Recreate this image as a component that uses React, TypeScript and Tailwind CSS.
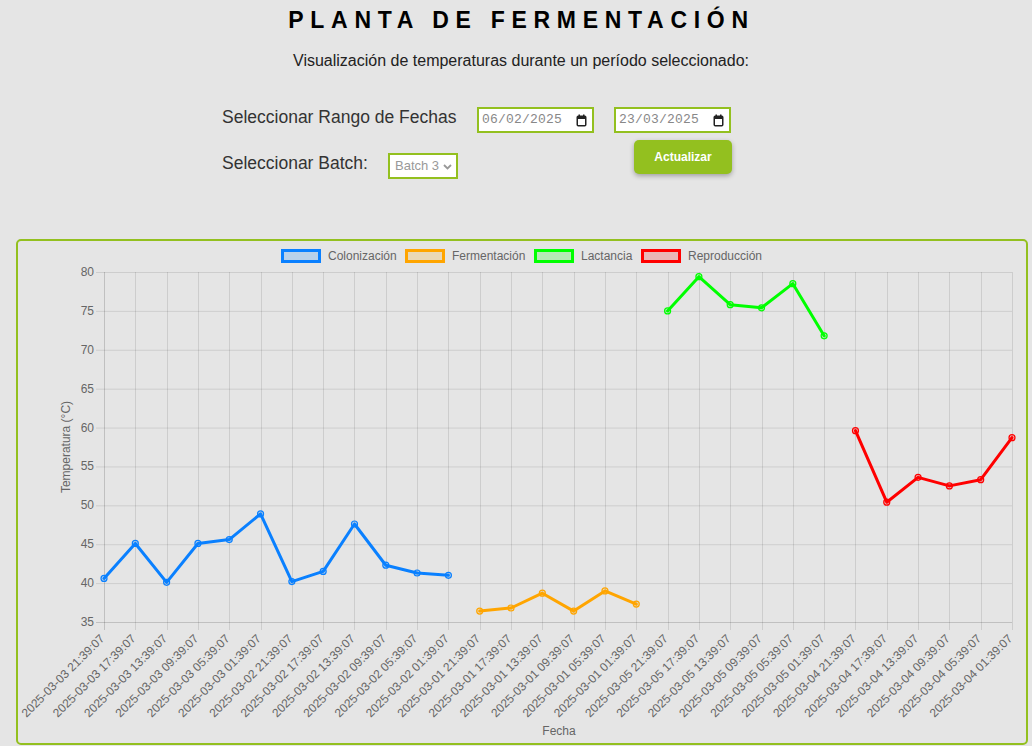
import React from "react";

const GREEN = "#93c01f";
const FONT = '"Liberation Sans", Arial, sans-serif';

const X0 = 104;
const X1 = 1012;
const Y80 = 272;
const Y35 = 622;
const N = 30;
const xAt = (i: number) => X0 + (i * (X1 - X0)) / (N - 1);
const yAt = (v: number) => Y80 + ((80 - v) * (Y35 - Y80)) / 45;

const days = ["03", "02", "01", "05", "04"];
const hours = ["21", "17", "13", "09", "05", "01"];
const labels: string[] = [];
days.forEach((d) => hours.forEach((h) => labels.push(`2025-03-${d} ${h}:39:07`)));

type Series = { name: string; color: string; fill: string; start: number; values: number[] };
const series: Series[] = [
  {
    name: "Colonización",
    color: "#0a80ff",
    fill: "rgba(10,128,255,0.2)",
    start: 0,
    values: [40.6, 45.1, 40.1, 45.1, 45.6, 48.9, 40.2, 41.5, 47.6, 42.3, 41.3, 41.0],
  },
  { name: "Fermentación", color: "#ffa500", fill: "rgba(255,165,0,0.2)", start: 12, values: [36.4, 36.8, 38.7, 36.4, 39.0, 37.3] },
  { name: "Lactancia", color: "#00ff00", fill: "rgba(0,255,0,0.2)", start: 18, values: [75.0, 79.4, 75.8, 75.4, 78.5, 71.8] },
  { name: "Reproducción", color: "#ff0000", fill: "rgba(255,0,0,0.2)", start: 24, values: [59.6, 50.4, 53.6, 52.5, 53.3, 58.7] },
];

const legend = [
  { box: 281, text: 328 },
  { box: 405, text: 452 },
  { box: 534, text: 581 },
  { box: 641, text: 688 },
];

const yTicks = [80, 75, 70, 65, 60, 55, 50, 45, 40, 35];

function Chart() {
  return (
    <svg width={1008} height={502} viewBox="18 241 1008 502" className="block" style={{ fontFamily: FONT }}>
      {series.map((s, i) => (
        <g key={s.name}>
          <rect x={legend[i].box + 1.5} y={250.5} width={37} height={11} fill={s.fill} stroke={s.color} strokeWidth={3} />
          <text x={legend[i].text} y={260} fontSize={12} fill="#666">
            {s.name}
          </text>
        </g>
      ))}
      {yTicks.map((v) => (
        <g key={v}>
          <line x1={96} x2={X1} y1={yAt(v) + 0.5} y2={yAt(v) + 0.5} stroke={v === 35 ? "rgba(0,0,0,0.16)" : "rgba(0,0,0,0.1)"} strokeWidth={1} />
          <text x={94} y={yAt(v) + 4} fontSize={12} fill="#666" textAnchor="end">
            {v}
          </text>
        </g>
      ))}
      {labels.map((l, i) => (
        <g key={l}>
          <line
            x1={Math.round(xAt(i)) + 0.5}
            x2={Math.round(xAt(i)) + 0.5}
            y1={Y80}
            y2={630}
            stroke={i === 0 ? "rgba(0,0,0,0.16)" : "rgba(0,0,0,0.1)"}
            strokeWidth={1}
          />
          <text
            x={xAt(i) - 1}
            y={637}
            fontSize={12}
            fill="#666"
            textAnchor="end"
            dominantBaseline="middle"
            transform={`rotate(-45 ${xAt(i) - 1} 637)`}
          >
            {l}
          </text>
        </g>
      ))}
      <text x={70} y={447} fontSize={12} fill="#666" textAnchor="middle" transform="rotate(-90 70 447)">
        Temperatura (°C)
      </text>
      <text x={559} y={735} fontSize={12} fill="#666" textAnchor="middle">
        Fecha
      </text>
      {series.map((s) => {
        const pts = s.values.map((v, k) => [xAt(s.start + k), yAt(v)] as const);
        return (
          <g key={s.name}>
            <polyline
              points={pts.map((p) => `${p[0]},${p[1]}`).join(" ")}
              fill="none"
              stroke={s.color}
              strokeWidth={3}
              strokeLinejoin="round"
              strokeLinecap="round"
            />
            {pts.map((p, k) => (
              <circle key={k} cx={p[0]} cy={p[1]} r={3} fill={s.fill} stroke={s.color} strokeWidth={1.2} />
            ))}
          </g>
        );
      })}
    </svg>
  );
}

function CalendarIcon() {
  return (
    <svg width={11} height={13} viewBox="0 0 11 13">
      <rect x={1.25} y={2.25} width={8.5} height={9.5} rx={1} fill="none" stroke="#222" strokeWidth={1.5} />
      <rect x={1} y={2} width={9} height={3} fill="#222" />
      <rect x={2.5} y={0.5} width={1.5} height={2} fill="#222" />
      <rect x={7} y={0.5} width={1.5} height={2} fill="#222" />
    </svg>
  );
}

function DateBox({ value }: { value: string }) {
  return (
    <div className="w-[117px] h-[26px] border-2 border-[#93c01f] bg-white flex items-center justify-between pl-[3px] pr-[5px]">
      <span className="text-[13px] text-[#888] tracking-[0.2px]" style={{ fontFamily: '"Liberation Mono", "DejaVu Sans Mono", monospace' }}>
        {value}
      </span>
      <CalendarIcon />
    </div>
  );
}

export default function App() {
  return (
    <div className="w-[1032px] h-[746px] bg-[#e5e5e5] overflow-hidden" style={{ fontFamily: FONT }}>
      <div className="pt-[9px] pl-[10px] text-center">
        <div className="text-[23px] leading-[23px] font-bold text-black tracking-[6.7px] pl-[1px]">
          PLANTA DE FERMENTACIÓN
        </div>
        <div className="mt-[19px] text-[16px] leading-[20px] text-[#222]">
          Visualización de temperaturas durante un período seleccionado:
        </div>
      </div>

      <div className="mt-[36px] ml-[222px] flex">
        <div className="flex flex-col gap-[20px]">
          <div className="flex items-start">
            <div className="text-[17.5px] leading-[20px] text-[#333] w-[255px]">Seleccionar Rango de Fechas</div>
            <DateBox value="06/02/2025" />
          </div>
          <div className="flex items-start">
            <div className="text-[17.5px] leading-[20px] text-[#333] w-[166px]">Seleccionar Batch:</div>
            <div className="w-[70px] h-[26px] border-2 border-[#93c01f] bg-white flex items-center pl-[5px]">
              <span className="text-[13px] text-[#999]">Batch 3</span>
              <svg width={9} height={6} viewBox="0 0 9 6" className="ml-[4px] mt-[1px]">
                <path d="M1 1 L4.5 4.5 L8 1" fill="none" stroke="#999" strokeWidth={1.8} />
              </svg>
            </div>
          </div>
        </div>
        <div className="ml-[20px] flex flex-col">
          <DateBox value="23/03/2025" />
          <button className="mt-[7px] ml-[20px] w-[98px] h-[34px] rounded-[5px] bg-[#93c01f] text-white text-[12px] font-bold shadow-[0_2px_5px_rgba(0,0,0,0.3)]">
            Actualizar
          </button>
        </div>
      </div>

      <div className="mt-[60px] ml-[16px] w-[1012px] h-[506px] border-2 rounded-[5px]" style={{ borderColor: GREEN }}>
        <Chart />
      </div>
    </div>
  );
}
